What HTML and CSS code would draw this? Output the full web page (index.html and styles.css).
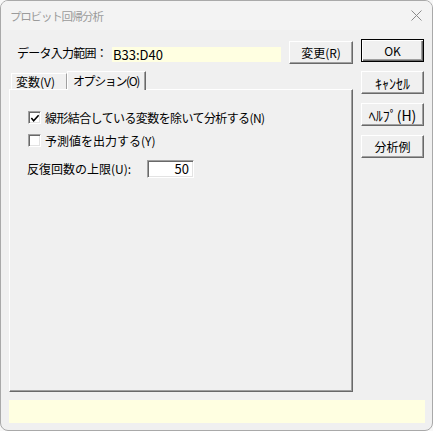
FILE: index.html
```html
<!DOCTYPE html>
<html lang="ja">
<head>
<meta charset="utf-8">
<title>プロビット回帰分析</title>
<link rel="stylesheet" href="styles.css">
</head>
<body>
<div class="window">
  <div class="titlebar">
    <span class="title">プロビット回帰分析</span>
    <svg class="close" width="11" height="11" viewBox="0 0 11 11"><path d="M0.5 0.5 L10.5 10.5 M10.5 0.5 L0.5 10.5" stroke="#8a8a8a" stroke-width="1" fill="none"/></svg>
  </div>
  <div class="main">
    <div class="left">
      <div class="range-row">
        <span class="range-label">データ入力範囲：</span>
        <span class="range-field">B33:D40</span>
        <button class="btn btn-change">変更(R)</button>
      </div>
      <div class="tabs">
        <div class="tab">変数(V)</div>
        <div class="tab tab-active">オプション(O)</div>
      </div>
      <div class="panel">
        <div class="check-row">
          <span class="checkbox"><svg width="11" height="11" viewBox="0 0 11 11"><path d="M1.5 5 L4 8 L9.5 2" stroke="#000" stroke-width="1.7" fill="none"/></svg></span>
          <span class="check-text tight">線形結合している変数を除いて分析する(N)</span>
        </div>
        <div class="check-row second">
          <span class="checkbox"></span>
          <span class="check-text">予測値を出力する(Y)</span>
        </div>
        <div class="limit-row">
          <span class="limit-label">反復回数の上限(U):</span>
          <span class="num-field">50</span>
        </div>
      </div>
    </div>
    <div class="right">
      <button class="btn btn-default">OK</button>
      <button class="btn hw">ｷｬﾝｾﾙ</button>
      <button class="btn hw">ﾍﾙﾌﾟ(H)</button>
      <button class="btn">分析例</button>
    </div>
  </div>
  <div class="status"></div>
</div>
</body>
</html>
```
FILE: styles.css
```css
html, body {
  margin: 0;
  padding: 0;
  background: #f7f7f7;
}
body {
  font-family: "Noto Sans CJK JP", "Noto Sans", sans-serif;
  font-size: 12px;
  color: #000;
}
.window {
  width: 433px;
  height: 431px;
  box-sizing: border-box;
  border: 1px solid #a9a9a9;
  border-radius: 8px;
  background: #f0f0f0;
  display: flex;
  flex-direction: column;
  overflow: hidden;
}
.titlebar {
  height: 29px;
  flex: none;
  background: #f3f3f3;
  display: flex;
  align-items: center;
  justify-content: space-between;
  padding: 0 10px 0 9px;
}
.title {
  font-size: 11.5px;
  letter-spacing: -1.2px;
  color: #9b9b9b;
  line-height: 14px;
}
.close {
  display: block;
}
.main {
  flex: 1;
  display: flex;
  padding: 9px 8px 0 8px;
  min-height: 0;
}
.left {
  width: 344px;
  display: flex;
  flex-direction: column;
}
.right {
  width: 63px;
  margin-left: 8px;
  display: flex;
  flex-direction: column;
  gap: 9px;
}
.range-row {
  margin-top: 2px;
  height: 23px;
  display: flex;
  align-items: flex-end;
  padding-left: 8px;
}
.range-label {
  width: 95px;
  align-self: center;
  letter-spacing: -0.75px;
  line-height: 14px;
}
.range-field {
  width: 169px;
  height: 15px;
  margin-bottom: 2px;
  background: #ffffe1;
  font-size: 13px;
  line-height: 15px;
  padding-left: 1px;
  box-sizing: border-box;
}
.btn {
  width: 63px;
  height: 23px;
  box-sizing: border-box;
  padding: 0;
  margin: 0;
  font-family: "Noto Sans CJK JP", "Noto Sans", sans-serif;
  font-size: 12px;
  color: #000;
  background: #f0f0f0;
  border: 1px solid;
  border-color: #ffffff #696969 #696969 #ffffff;
  box-shadow: inset -1px -1px #a0a0a0;
  line-height: 20px;
  text-align: center;
}
.btn.hw {
  font-size: 14px;
}
.btn-change {
  width: 64px;
  margin-left: 8px;
}
.btn-default {
  border-color: #000;
  box-shadow: inset 1px 1px #ffffff, inset -1px -1px #696969, inset -2px -2px #a0a0a0;
}
.tabs {
  margin-top: 7px;
  height: 18px;
  display: flex;
  align-items: flex-end;
  padding-left: 2px;
}
.tab {
  height: 16px;
  box-sizing: border-box;
  width: 56px;
  padding-left: 4px;
  border-top: 1px solid #ffffff;
  border-left: 1px solid #ffffff;
  border-right: 1px solid #a0a0a0;
  line-height: 15px;
  background: #f0f0f0;
}
.tab-active {
  position: relative;
  z-index: 1;
  width: 79px;
  height: 19px;
  margin-bottom: -1px;
  padding-left: 5px;
  border-right: 1px solid #696969;
  box-shadow: inset -1px 0 #a0a0a0;
  letter-spacing: -1.4px;
  line-height: 17px;
}
.panel {
  flex: 1;
  box-sizing: border-box;
  border: 1px solid;
  border-color: #ffffff #696969 #696969 #ffffff;
  box-shadow: inset -1px -1px #a0a0a0;
  padding: 21px 0 0 18px;
}
.check-row {
  height: 13px;
  display: flex;
  align-items: center;
  gap: 4px;
}
.check-row.second {
  margin-top: 10px;
}
.checkbox {
  width: 13px;
  height: 13px;
  box-sizing: border-box;
  background: #fff;
  border: 1px solid;
  border-color: #a0a0a0 #ffffff #ffffff #a0a0a0;
  box-shadow: inset 1px 1px #696969, inset -1px -1px #e3e3e3;
  display: flex;
  align-items: center;
  justify-content: center;
  padding: 1px 0 0 1px;
}
.checkbox svg {
  display: block;
}
.check-text {
  line-height: 14px;
}
.check-text.tight {
  letter-spacing: -0.6px;
}
.limit-row {
  margin-top: 13px;
  margin-left: -1px;
  display: flex;
  align-items: center;
}
.limit-label {
  width: 120px;
  line-height: 14px;
}
.num-field {
  width: 47px;
  height: 18px;
  box-sizing: border-box;
  background: #fff;
  border: 1px solid;
  border-color: #a0a0a0 #ffffff #ffffff #a0a0a0;
  box-shadow: inset 1px 1px #696969, inset -1px -1px #e3e3e3;
  font-size: 13px;
  line-height: 16px;
  text-align: right;
  padding-right: 4px;
}
.status {
  flex: none;
  height: 23px;
  margin: 8px 7px 7px 8px;
  background: #ffffe1;
}
```
